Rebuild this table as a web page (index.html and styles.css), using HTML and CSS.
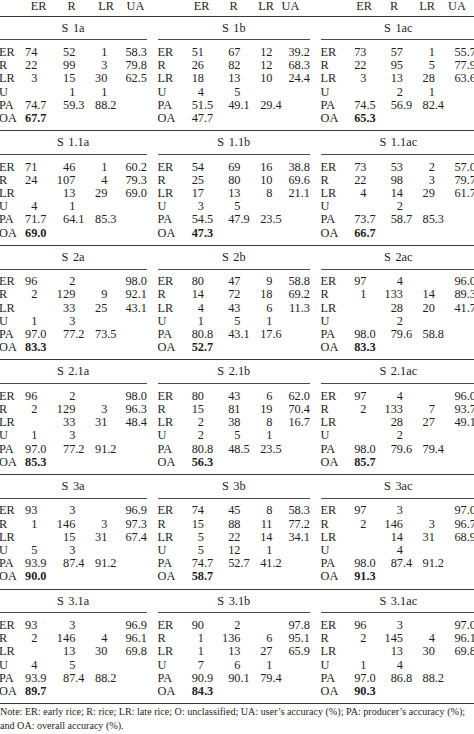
FILE: index.html
```html
<!DOCTYPE html>
<html>
<head>
<meta charset="utf-8">
<link rel="stylesheet" href="styles.css">
</head>
<body>
<div class="page">
  <div class="panels head">
    <div class="hp p1"><span>ER</span><span>R</span><span>LR</span><span>UA</span></div>
    <div class="hp p2"><span>ER</span><span>R</span><span>LR</span><span>UA</span></div>
    <div class="hp p3"><span>ER</span><span>R</span><span>LR</span><span>UA</span></div>
  </div>

  <div class="panels block">
    <div class="panel p1">
      <div class="title">S 1a</div>
      <div class="rows">
        <div class="r"><span>ER</span><span class="i">74</span><span></span><span class="i">52</span><span></span><span class="i">1</span><span></span><span class="ua">58.3</span></div>
        <div class="r"><span>R</span><span class="i">22</span><span></span><span class="i">99</span><span></span><span class="i">3</span><span></span><span class="ua">79.8</span></div>
        <div class="r"><span>LR</span><span class="i">3</span><span></span><span class="i">15</span><span></span><span class="i">30</span><span></span><span class="ua">62.5</span></div>
        <div class="r"><span>U</span><span class="i"></span><span></span><span class="i">1</span><span></span><span class="i">1</span><span></span><span class="ua"></span></div>
        <div class="r"><span>PA</span><span class="i">74</span><span>.7</span><span class="i">59</span><span>.3</span><span class="i">88</span><span>.2</span><span class="ua"></span></div>
        <div class="r"><span>OA</span><span class="i bold">67</span><span class="bold">.7</span></div>
      </div>
    </div>
    <div class="panel p2">
      <div class="title">S 1b</div>
      <div class="rows">
        <div class="r"><span>ER</span><span class="i">51</span><span></span><span class="i">67</span><span></span><span class="i">12</span><span></span><span class="ua">39.2</span></div>
        <div class="r"><span>R</span><span class="i">26</span><span></span><span class="i">82</span><span></span><span class="i">12</span><span></span><span class="ua">68.3</span></div>
        <div class="r"><span>LR</span><span class="i">18</span><span></span><span class="i">13</span><span></span><span class="i">10</span><span></span><span class="ua">24.4</span></div>
        <div class="r"><span>U</span><span class="i">4</span><span></span><span class="i">5</span><span></span><span class="i"></span><span></span><span class="ua"></span></div>
        <div class="r"><span>PA</span><span class="i">51</span><span>.5</span><span class="i">49</span><span>.1</span><span class="i">29</span><span>.4</span><span class="ua"></span></div>
        <div class="r"><span>OA</span><span class="i">47</span><span>.7</span></div>
      </div>
    </div>
    <div class="panel p3">
      <div class="title">S 1ac</div>
      <div class="rows">
        <div class="r"><span>ER</span><span class="i">73</span><span></span><span class="i">57</span><span></span><span class="i">1</span><span></span><span class="ua">55.7</span></div>
        <div class="r"><span>R</span><span class="i">22</span><span></span><span class="i">95</span><span></span><span class="i">5</span><span></span><span class="ua">77.9</span></div>
        <div class="r"><span>LR</span><span class="i">3</span><span></span><span class="i">13</span><span></span><span class="i">28</span><span></span><span class="ua">63.6</span></div>
        <div class="r"><span>U</span><span class="i"></span><span></span><span class="i">2</span><span></span><span class="i">1</span><span></span><span class="ua"></span></div>
        <div class="r"><span>PA</span><span class="i">74</span><span>.5</span><span class="i">56</span><span>.9</span><span class="i">82</span><span>.4</span><span class="ua"></span></div>
        <div class="r"><span>OA</span><span class="i bold">65</span><span class="bold">.3</span></div>
      </div>
    </div>
  </div>

  <div class="panels block">
    <div class="panel p1">
      <div class="title">S 1.1a</div>
      <div class="rows">
        <div class="r"><span>ER</span><span class="i">71</span><span></span><span class="i">46</span><span></span><span class="i">1</span><span></span><span class="ua">60.2</span></div>
        <div class="r"><span>R</span><span class="i">24</span><span></span><span class="i">107</span><span></span><span class="i">4</span><span></span><span class="ua">79.3</span></div>
        <div class="r"><span>LR</span><span class="i"></span><span></span><span class="i">13</span><span></span><span class="i">29</span><span></span><span class="ua">69.0</span></div>
        <div class="r"><span>U</span><span class="i">4</span><span></span><span class="i">1</span><span></span><span class="i"></span><span></span><span class="ua"></span></div>
        <div class="r"><span>PA</span><span class="i">71</span><span>.7</span><span class="i">64</span><span>.1</span><span class="i">85</span><span>.3</span><span class="ua"></span></div>
        <div class="r"><span>OA</span><span class="i bold">69</span><span class="bold">.0</span></div>
      </div>
    </div>
    <div class="panel p2">
      <div class="title">S 1.1b</div>
      <div class="rows">
        <div class="r"><span>ER</span><span class="i">54</span><span></span><span class="i">69</span><span></span><span class="i">16</span><span></span><span class="ua">38.8</span></div>
        <div class="r"><span>R</span><span class="i">25</span><span></span><span class="i">80</span><span></span><span class="i">10</span><span></span><span class="ua">69.6</span></div>
        <div class="r"><span>LR</span><span class="i">17</span><span></span><span class="i">13</span><span></span><span class="i">8</span><span></span><span class="ua">21.1</span></div>
        <div class="r"><span>U</span><span class="i">3</span><span></span><span class="i">5</span><span></span><span class="i"></span><span></span><span class="ua"></span></div>
        <div class="r"><span>PA</span><span class="i">54</span><span>.5</span><span class="i">47</span><span>.9</span><span class="i">23</span><span>.5</span><span class="ua"></span></div>
        <div class="r"><span>OA</span><span class="i bold">47</span><span class="bold">.3</span></div>
      </div>
    </div>
    <div class="panel p3">
      <div class="title">S 1.1ac</div>
      <div class="rows">
        <div class="r"><span>ER</span><span class="i">73</span><span></span><span class="i">53</span><span></span><span class="i">2</span><span></span><span class="ua">57.0</span></div>
        <div class="r"><span>R</span><span class="i">22</span><span></span><span class="i">98</span><span></span><span class="i">3</span><span></span><span class="ua">79.7</span></div>
        <div class="r"><span>LR</span><span class="i">4</span><span></span><span class="i">14</span><span></span><span class="i">29</span><span></span><span class="ua">61.7</span></div>
        <div class="r"><span>U</span><span class="i"></span><span></span><span class="i">2</span><span></span><span class="i"></span><span></span><span class="ua"></span></div>
        <div class="r"><span>PA</span><span class="i">73</span><span>.7</span><span class="i">58</span><span>.7</span><span class="i">85</span><span>.3</span><span class="ua"></span></div>
        <div class="r"><span>OA</span><span class="i bold">66</span><span class="bold">.7</span></div>
      </div>
    </div>
  </div>

  <div class="panels block">
    <div class="panel p1">
      <div class="title">S 2a</div>
      <div class="rows">
        <div class="r"><span>ER</span><span class="i">96</span><span></span><span class="i">2</span><span></span><span class="i"></span><span></span><span class="ua">98.0</span></div>
        <div class="r"><span>R</span><span class="i">2</span><span></span><span class="i">129</span><span></span><span class="i">9</span><span></span><span class="ua">92.1</span></div>
        <div class="r"><span>LR</span><span class="i"></span><span></span><span class="i">33</span><span></span><span class="i">25</span><span></span><span class="ua">43.1</span></div>
        <div class="r"><span>U</span><span class="i">1</span><span></span><span class="i">3</span><span></span><span class="i"></span><span></span><span class="ua"></span></div>
        <div class="r"><span>PA</span><span class="i">97</span><span>.0</span><span class="i">77</span><span>.2</span><span class="i">73</span><span>.5</span><span class="ua"></span></div>
        <div class="r"><span>OA</span><span class="i bold">83</span><span class="bold">.3</span></div>
      </div>
    </div>
    <div class="panel p2">
      <div class="title">S 2b</div>
      <div class="rows">
        <div class="r"><span>ER</span><span class="i">80</span><span></span><span class="i">47</span><span></span><span class="i">9</span><span></span><span class="ua">58.8</span></div>
        <div class="r"><span>R</span><span class="i">14</span><span></span><span class="i">72</span><span></span><span class="i">18</span><span></span><span class="ua">69.2</span></div>
        <div class="r"><span>LR</span><span class="i">4</span><span></span><span class="i">43</span><span></span><span class="i">6</span><span></span><span class="ua">11.3</span></div>
        <div class="r"><span>U</span><span class="i">1</span><span></span><span class="i">5</span><span></span><span class="i">1</span><span></span><span class="ua"></span></div>
        <div class="r"><span>PA</span><span class="i">80</span><span>.8</span><span class="i">43</span><span>.1</span><span class="i">17</span><span>.6</span><span class="ua"></span></div>
        <div class="r"><span>OA</span><span class="i bold">52</span><span class="bold">.7</span></div>
      </div>
    </div>
    <div class="panel p3">
      <div class="title">S 2ac</div>
      <div class="rows">
        <div class="r"><span>ER</span><span class="i">97</span><span></span><span class="i">4</span><span></span><span class="i"></span><span></span><span class="ua">96.0</span></div>
        <div class="r"><span>R</span><span class="i">1</span><span></span><span class="i">133</span><span></span><span class="i">14</span><span></span><span class="ua">89.3</span></div>
        <div class="r"><span>LR</span><span class="i"></span><span></span><span class="i">28</span><span></span><span class="i">20</span><span></span><span class="ua">41.7</span></div>
        <div class="r"><span>U</span><span class="i"></span><span></span><span class="i">2</span><span></span><span class="i"></span><span></span><span class="ua"></span></div>
        <div class="r"><span>PA</span><span class="i">98</span><span>.0</span><span class="i">79</span><span>.6</span><span class="i">58</span><span>.8</span><span class="ua"></span></div>
        <div class="r"><span>OA</span><span class="i bold">83</span><span class="bold">.3</span></div>
      </div>
    </div>
  </div>

  <div class="panels block">
    <div class="panel p1">
      <div class="title">S 2.1a</div>
      <div class="rows">
        <div class="r"><span>ER</span><span class="i">96</span><span></span><span class="i">2</span><span></span><span class="i"></span><span></span><span class="ua">98.0</span></div>
        <div class="r"><span>R</span><span class="i">2</span><span></span><span class="i">129</span><span></span><span class="i">3</span><span></span><span class="ua">96.3</span></div>
        <div class="r"><span>LR</span><span class="i"></span><span></span><span class="i">33</span><span></span><span class="i">31</span><span></span><span class="ua">48.4</span></div>
        <div class="r"><span>U</span><span class="i">1</span><span></span><span class="i">3</span><span></span><span class="i"></span><span></span><span class="ua"></span></div>
        <div class="r"><span>PA</span><span class="i">97</span><span>.0</span><span class="i">77</span><span>.2</span><span class="i">91</span><span>.2</span><span class="ua"></span></div>
        <div class="r"><span>OA</span><span class="i bold">85</span><span class="bold">.3</span></div>
      </div>
    </div>
    <div class="panel p2">
      <div class="title">S 2.1b</div>
      <div class="rows">
        <div class="r"><span>ER</span><span class="i">80</span><span></span><span class="i">43</span><span></span><span class="i">6</span><span></span><span class="ua">62.0</span></div>
        <div class="r"><span>R</span><span class="i">15</span><span></span><span class="i">81</span><span></span><span class="i">19</span><span></span><span class="ua">70.4</span></div>
        <div class="r"><span>LR</span><span class="i">2</span><span></span><span class="i">38</span><span></span><span class="i">8</span><span></span><span class="ua">16.7</span></div>
        <div class="r"><span>U</span><span class="i">2</span><span></span><span class="i">5</span><span></span><span class="i">1</span><span></span><span class="ua"></span></div>
        <div class="r"><span>PA</span><span class="i">80</span><span>.8</span><span class="i">48</span><span>.5</span><span class="i">23</span><span>.5</span><span class="ua"></span></div>
        <div class="r"><span>OA</span><span class="i bold">56</span><span class="bold">.3</span></div>
      </div>
    </div>
    <div class="panel p3">
      <div class="title">S 2.1ac</div>
      <div class="rows">
        <div class="r"><span>ER</span><span class="i">97</span><span></span><span class="i">4</span><span></span><span class="i"></span><span></span><span class="ua">96.0</span></div>
        <div class="r"><span>R</span><span class="i">2</span><span></span><span class="i">133</span><span></span><span class="i">7</span><span></span><span class="ua">93.7</span></div>
        <div class="r"><span>LR</span><span class="i"></span><span></span><span class="i">28</span><span></span><span class="i">27</span><span></span><span class="ua">49.1</span></div>
        <div class="r"><span>U</span><span class="i"></span><span></span><span class="i">2</span><span></span><span class="i"></span><span></span><span class="ua"></span></div>
        <div class="r"><span>PA</span><span class="i">98</span><span>.0</span><span class="i">79</span><span>.6</span><span class="i">79</span><span>.4</span><span class="ua"></span></div>
        <div class="r"><span>OA</span><span class="i bold">85</span><span class="bold">.7</span></div>
      </div>
    </div>
  </div>

  <div class="panels block">
    <div class="panel p1">
      <div class="title">S 3a</div>
      <div class="rows">
        <div class="r"><span>ER</span><span class="i">93</span><span></span><span class="i">3</span><span></span><span class="i"></span><span></span><span class="ua">96.9</span></div>
        <div class="r"><span>R</span><span class="i">1</span><span></span><span class="i">146</span><span></span><span class="i">3</span><span></span><span class="ua">97.3</span></div>
        <div class="r"><span>LR</span><span class="i"></span><span></span><span class="i">15</span><span></span><span class="i">31</span><span></span><span class="ua">67.4</span></div>
        <div class="r"><span>U</span><span class="i">5</span><span></span><span class="i">3</span><span></span><span class="i"></span><span></span><span class="ua"></span></div>
        <div class="r"><span>PA</span><span class="i">93</span><span>.9</span><span class="i">87</span><span>.4</span><span class="i">91</span><span>.2</span><span class="ua"></span></div>
        <div class="r"><span>OA</span><span class="i bold">90</span><span class="bold">.0</span></div>
      </div>
    </div>
    <div class="panel p2">
      <div class="title">S 3b</div>
      <div class="rows">
        <div class="r"><span>ER</span><span class="i">74</span><span></span><span class="i">45</span><span></span><span class="i">8</span><span></span><span class="ua">58.3</span></div>
        <div class="r"><span>R</span><span class="i">15</span><span></span><span class="i">88</span><span></span><span class="i">11</span><span></span><span class="ua">77.2</span></div>
        <div class="r"><span>LR</span><span class="i">5</span><span></span><span class="i">22</span><span></span><span class="i">14</span><span></span><span class="ua">34.1</span></div>
        <div class="r"><span>U</span><span class="i">5</span><span></span><span class="i">12</span><span></span><span class="i">1</span><span></span><span class="ua"></span></div>
        <div class="r"><span>PA</span><span class="i">74</span><span>.7</span><span class="i">52</span><span>.7</span><span class="i">41</span><span>.2</span><span class="ua"></span></div>
        <div class="r"><span>OA</span><span class="i bold">58</span><span class="bold">.7</span></div>
      </div>
    </div>
    <div class="panel p3">
      <div class="title">S 3ac</div>
      <div class="rows">
        <div class="r"><span>ER</span><span class="i">97</span><span></span><span class="i">3</span><span></span><span class="i"></span><span></span><span class="ua">97.0</span></div>
        <div class="r"><span>R</span><span class="i">2</span><span></span><span class="i">146</span><span></span><span class="i">3</span><span></span><span class="ua">96.7</span></div>
        <div class="r"><span>LR</span><span class="i"></span><span></span><span class="i">14</span><span></span><span class="i">31</span><span></span><span class="ua">68.9</span></div>
        <div class="r"><span>U</span><span class="i"></span><span></span><span class="i">4</span><span></span><span class="i"></span><span></span><span class="ua"></span></div>
        <div class="r"><span>PA</span><span class="i">98</span><span>.0</span><span class="i">87</span><span>.4</span><span class="i">91</span><span>.2</span><span class="ua"></span></div>
        <div class="r"><span>OA</span><span class="i bold">91</span><span class="bold">.3</span></div>
      </div>
    </div>
  </div>

  <div class="panels block last">
    <div class="panel p1">
      <div class="title">S 3.1a</div>
      <div class="rows">
        <div class="r"><span>ER</span><span class="i">93</span><span></span><span class="i">3</span><span></span><span class="i"></span><span></span><span class="ua">96.9</span></div>
        <div class="r"><span>R</span><span class="i">2</span><span></span><span class="i">146</span><span></span><span class="i">4</span><span></span><span class="ua">96.1</span></div>
        <div class="r"><span>LR</span><span class="i"></span><span></span><span class="i">13</span><span></span><span class="i">30</span><span></span><span class="ua">69.8</span></div>
        <div class="r"><span>U</span><span class="i">4</span><span></span><span class="i">5</span><span></span><span class="i"></span><span></span><span class="ua"></span></div>
        <div class="r"><span>PA</span><span class="i">93</span><span>.9</span><span class="i">87</span><span>.4</span><span class="i">88</span><span>.2</span><span class="ua"></span></div>
        <div class="r"><span>OA</span><span class="i bold">89</span><span class="bold">.7</span></div>
      </div>
    </div>
    <div class="panel p2">
      <div class="title">S 3.1b</div>
      <div class="rows">
        <div class="r"><span>ER</span><span class="i">90</span><span></span><span class="i">2</span><span></span><span class="i"></span><span></span><span class="ua">97.8</span></div>
        <div class="r"><span>R</span><span class="i">1</span><span></span><span class="i">136</span><span></span><span class="i">6</span><span></span><span class="ua">95.1</span></div>
        <div class="r"><span>LR</span><span class="i">1</span><span></span><span class="i">13</span><span></span><span class="i">27</span><span></span><span class="ua">65.9</span></div>
        <div class="r"><span>U</span><span class="i">7</span><span></span><span class="i">6</span><span></span><span class="i">1</span><span></span><span class="ua"></span></div>
        <div class="r"><span>PA</span><span class="i">90</span><span>.9</span><span class="i">90</span><span>.1</span><span class="i">79</span><span>.4</span><span class="ua"></span></div>
        <div class="r"><span>OA</span><span class="i bold">84</span><span class="bold">.3</span></div>
      </div>
    </div>
    <div class="panel p3">
      <div class="title">S 3.1ac</div>
      <div class="rows">
        <div class="r"><span>ER</span><span class="i">96</span><span></span><span class="i">3</span><span></span><span class="i"></span><span></span><span class="ua">97.0</span></div>
        <div class="r"><span>R</span><span class="i">2</span><span></span><span class="i">145</span><span></span><span class="i">4</span><span></span><span class="ua">96.1</span></div>
        <div class="r"><span>LR</span><span class="i"></span><span></span><span class="i">13</span><span></span><span class="i">30</span><span></span><span class="ua">69.8</span></div>
        <div class="r"><span>U</span><span class="i">1</span><span></span><span class="i">4</span><span></span><span class="i"></span><span></span><span class="ua"></span></div>
        <div class="r"><span>PA</span><span class="i">97</span><span>.0</span><span class="i">86</span><span>.8</span><span class="i">88</span><span>.2</span><span class="ua"></span></div>
        <div class="r"><span>OA</span><span class="i bold">90</span><span class="bold">.3</span></div>
      </div>
    </div>
  </div>

  <p class="note">Note: ER: early rice; R: rice; LR: late rice; O: unclassified; UA: user’s accuracy (%); PA: producer’s accuracy (%);<br>and OA: overall accuracy (%).</p>
</div>
</body>
</html>
```

FILE: styles.css
```css
html, body {
  margin: 0;
  padding: 0;
  background: #ffffff;
}

body {
  width: 474px;
  height: 734px;
  overflow: hidden;
  font-family: "Liberation Serif", "Times New Roman", serif;
  font-size: 12.3px;
  color: #1e1e1e;
}

.page {
  margin-left: -1px;
  width: 477px;
}

.panels {
  display: grid;
  grid-template-columns: 148px 152.5px 155.5px;
  column-gap: 10.5px;
}

.head {
  height: 15.7px;
  line-height: 13px;
}

.hp {
  display: grid;
}

.hp span {
  text-align: center;
  white-space: nowrap;
}

.hp span:nth-child(1) { grid-column: 2; }
.hp span:nth-child(2) { grid-column: 4; }
.hp span:nth-child(3) { grid-column: 6; }
.hp span:nth-child(4) { grid-column: 8; }

.hp.p1 { grid-template-columns: 27.5px 24px 9px 24px 10.5px 24px 5.5px 24px; }
.hp.p2 { grid-template-columns: 32px 24px 8px 24px 8.5px 24px 0.5px 24px; }
.hp.p3 { grid-template-columns: 31.5px 24px 6px 24px 9px 24px 6px 24px; }

.block {
  border-top: 1.5px solid #3a3a3a;
}

.block.last {
  border-bottom: 1.5px solid #3a3a3a;
}

.title {
  text-align: center;
  line-height: 13px;
  height: 13px;
  padding: 5px 0 4.7px;
  border-bottom: 0.8px solid #4a4a4a;
  word-spacing: 1.5px;
}

.rows {
  padding: 5.7px 0 5.1px;
}

.r {
  display: grid;
  height: 13.2px;
  line-height: 13.2px;
  white-space: nowrap;
}

.p1 .r { grid-template-columns: 20px 18.3px 10px 28px 10px 22px 10px 29.7px; }
.p2 .r { grid-template-columns: 20px 26.5px 10px 26.5px 10px 22px 10px 27.5px; }
.p3 .r { grid-template-columns: 20px 26px 10px 26.5px 10px 21.8px 10px 31.2px; }

.i {
  text-align: right;
}

.ua {
  text-align: right;
}

.bold {
  font-weight: bold;
}

.note {
  margin: 0 0 0 1px;
  padding-top: 1px;
  font-size: 10.1px;
  line-height: 13.5px;
  white-space: nowrap;
}
```
